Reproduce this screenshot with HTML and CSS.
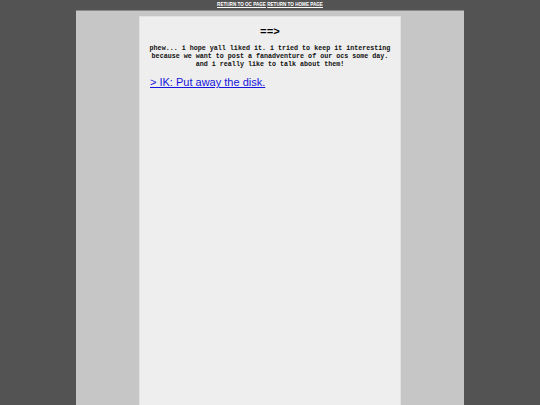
FILE: index.html
```html
<!DOCTYPE html>
<html>
<head>
<meta charset="utf-8">
<link rel="stylesheet" href="styles.css">
</head>
<body>
<div class="topnav">
  <a href="#">RETURN TO OC PAGE</a> <a href="#">RETURN TO HOME PAGE</a>
</div>
<div class="column">
  <div class="panel">
    <div class="arrow">==&gt;</div>
    <p class="story">phew... i hope yall liked it. i tried to keep it interesting<br>because we want to post a fanadventure of our ocs some day.<br>and i really like to talk about them!</p>
    <a class="next" href="#">&gt; IK: Put away the disk.</a>
  </div>
</div>
</body>
</html>
```
FILE: styles.css
```css
html, body {
  margin: 0;
  padding: 0;
  height: 100%;
}
body {
  background: #535353;
  overflow: hidden;
}
.topnav {
  height: 10px;
  text-align: center;
  font-family: "Liberation Sans", Arial, sans-serif;
  font-size: 4.6px;
  font-weight: bold;
  line-height: 10px;
}
.topnav a {
  color: #ffffff;
  text-decoration: underline;
}
.column {
  width: 388px;
  margin: 0 auto;
  background: #c6c6c6;
  border-top: 1px solid #8a8a8a;
  padding-top: 5px;
  height: 400px;
  box-sizing: border-box;
}
.panel {
  width: 262px;
  margin: 0 auto;
  background: #eeeeee;
  border: 1px solid #e2e2e2;
  box-sizing: border-box;
  height: 400px;
  padding: 8px 10px 0 10px;
}
.arrow {
  text-align: center;
  font-family: "Liberation Mono", "Courier New", monospace;
  font-weight: bold;
  font-size: 11px;
  line-height: 14px;
}
.story {
  margin: 5px -8px 0 -8px;
  text-align: center;
  white-space: nowrap;
  font-family: "Liberation Mono", "Courier New", monospace;
  font-weight: bold;
  font-size: 6.7px;
  line-height: 8px;
  color: #111111;
}
.next {
  display: block;
  margin-top: 7px;
  font-family: "Liberation Sans", Arial, sans-serif;
  font-size: 11px;
  line-height: 14px;
  color: #1515dd;
  text-decoration: underline;
}
```
